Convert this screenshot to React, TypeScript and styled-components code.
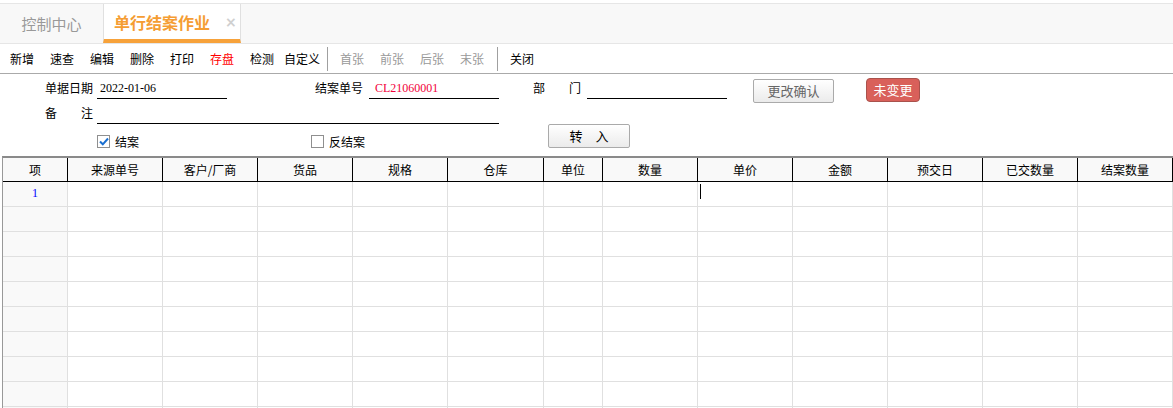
import React from 'react';
import styled, { createGlobalStyle } from 'styled-components';

const Global = createGlobalStyle`
  html, body { margin: 0; padding: 0; background: #fff; }
  body {
    font-family: "Noto Sans CJK SC", "Noto Sans", sans-serif;
    width: 1173px;
    height: 408px;
    overflow: hidden;
    color: #000;
  }
  * { box-sizing: border-box; }
`;

const Page = styled.div`
  display: flex;
  flex-direction: column;
  width: 1173px;
  height: 408px;
  overflow: hidden;
`;

const TabBar = styled.div`
  display: flex;
  margin-top: 3px;
  height: 41px;
  background: #f8f8f8;
  border-top: 1px solid #e6e6e6;
  border-bottom: 1px solid #e6e6e6;
`;

const Tab = styled.div<{ $active?: boolean }>`
  display: flex;
  align-items: center;
  height: 39px;
  font-size: ${p => (p.$active ? '16px' : '15px')};
  font-weight: ${p => (p.$active ? 700 : 400)};
  color: ${p => (p.$active ? '#f59d33' : '#999')};
  background: ${p => (p.$active ? '#fff' : 'transparent')};
  width: ${p => (p.$active ? '138px' : '103px')};
  justify-content: ${p => (p.$active ? 'flex-start' : 'center')};
  padding: ${p => (p.$active ? '0 0 0 10px' : '0')};
  border-left: ${p => (p.$active ? '1px solid #e0e0e0' : 'none')};
  border-right: ${p => (p.$active ? '1px solid #e0e0e0' : 'none')};
  border-bottom: ${p => (p.$active ? '4px solid #f7a23a' : 'none')};
`;

const Close = styled.span`
  margin-left: 15px;
  font-size: 14px;
  font-weight: 700;
  color: #d0d0d0;
  font-family: "DejaVu Sans", sans-serif;
`;

const Toolbar = styled.div`
  display: flex;
  align-items: center;
  height: 30px;
  padding-left: 2px;
  border-bottom: 1px solid #aaa;
`;

const ToolButton = styled.div<{ $tone?: 'red' | 'off' }>`
  width: 40px;
  text-align: center;
  font-size: 12px;
  line-height: 28px;
  color: ${p => (p.$tone === 'red' ? '#ff0000' : p.$tone === 'off' ? '#999' : '#000')};
  white-space: nowrap;
`;

const Sep = styled.div`
  width: 1px;
  height: 24px;
  background: #a0a0a0;
  margin: 0 4px 0 5px;
`;

const Form = styled.div`
  display: flex;
  flex-direction: column;
  padding: 4px 0 7px 0;
  height: 82px;
`;

const FormRow = styled.div<{ $h: number; $pl: number }>`
  display: flex;
  align-items: flex-start;
  height: ${p => p.$h}px;
  padding-left: ${p => p.$pl}px;
`;

const Label = styled.div<{ $ml?: number }>`
  display: flex;
  justify-content: space-between;
  width: 48px;
  margin-left: ${p => p.$ml ?? 0}px;
  font-size: 12px;
  line-height: 20px;
`;

const Line = styled.div<{ $w: number; $ml: number; $pl?: number; $red?: boolean }>`
  width: ${p => p.$w}px;
  height: 21px;
  margin-left: ${p => p.$ml}px;
  padding-left: ${p => p.$pl ?? 3}px;
  border-bottom: 1px solid #000;
  font-family: "Liberation Serif", serif;
  font-size: 12px;
  line-height: 20px;
  color: ${p => (p.$red ? '#f2003a' : '#000')};
`;

const Btn = styled.div<{ $ml: number; $w: number; $mt?: number; $tone?: 'gray' | 'dark' }>`
  margin-left: ${p => p.$ml}px;
  margin-top: ${p => p.$mt ?? 0}px;
  width: ${p => p.$w}px;
  height: 24px;
  border: 1px solid #aaa;
  border-radius: 2px;
  background: linear-gradient(#ffffff, #ebebeb);
  font-size: 13px;
  line-height: 22px;
  text-align: center;
  color: ${p => (p.$tone === 'gray' ? '#666' : '#000')};
  white-space: pre;
`;

const RedBtn = styled.div<{ $ml: number }>`
  margin-left: ${p => p.$ml}px;
  width: 54px;
  height: 24px;
  border: 1px solid #a9524c;
  border-radius: 4px;
  background: #d9605a;
  color: #fff;
  font-size: 13px;
  line-height: 22px;
  text-align: center;
`;

const Check = styled.label<{ $ml?: number }>`
  display: flex;
  align-items: center;
  margin-left: ${p => p.$ml ?? 0}px;
  margin-top: 11px;
  font-size: 12px;
  line-height: 13px;
  gap: 5px;
`;

const Box = styled.span`
  display: inline-flex;
  align-items: center;
  justify-content: center;
  width: 13px;
  height: 13px;
  border: 1px solid #8f8f8f;
  background: #fff;
`;

const Table = styled.div`
  margin-left: 2px;
  border-top: 2px solid #8a8a8a;
  border-left: 1px solid #999;
  flex: 1;
  overflow: hidden;
`;

const GridRow = styled.div<{ $head?: boolean }>`
  display: grid;
  grid-template-columns: 65px repeat(4, 95px) 96px 59px repeat(6, 95px);
  height: ${p => (p.$head ? 24 : 25)}px;
  border-bottom: 1px solid ${p => (p.$head ? '#000' : '#e0e0e0')};
  background: ${p => (p.$head ? '#f9f9f9' : '#fff')};
`;

const Cell = styled.div<{ $head?: boolean; $index?: boolean }>`
  border-right: 1px solid ${p => (p.$head ? '#000' : '#e0e0e0')};
  background: ${p => (p.$index ? '#f9f9f9' : 'transparent')};
  font-size: 12px;
  line-height: ${p => (p.$head ? 23 : 24)}px;
  text-align: center;
  display: flex;
  justify-content: center;
  align-items: ${p => (p.$head ? 'center' : 'flex-start')};
`;

const IndexNum = styled.span`
  font-family: "Liberation Serif", serif;
  font-size: 12px;
  color: #0000ff;
  line-height: 22px;
`;

const CaretCell = styled(Cell)`
  justify-content: flex-start;
  padding: 2px 0 0 2px;
`;

const Caret = styled.span`
  display: block;
  width: 1px;
  height: 15px;
  background: #000;
`;

const headers = ['项', '来源单号', '客户/厂商', '货品', '规格', '仓库', '单位', '数量', '单价', '金额', '预交日', '已交数量', '结案数量'];

const CheckMark = () => (
  <svg width="10" height="9" viewBox="0 0 10 9">
    <path d="M1 4.5 L3.8 7.3 L9 1.5" fill="none" stroke="#1a6fd0" strokeWidth="2" />
  </svg>
);

export default function App() {
  const rows = Array.from({ length: 10 }, (_, i) => i);
  return (
    <Page>
      <Global />
      <TabBar>
        <Tab>控制中心</Tab>
        <Tab $active>
          单行结案作业<Close>×</Close>
        </Tab>
      </TabBar>
      <Toolbar>
        <ToolButton>新增</ToolButton>
        <ToolButton>速查</ToolButton>
        <ToolButton>编辑</ToolButton>
        <ToolButton>删除</ToolButton>
        <ToolButton>打印</ToolButton>
        <ToolButton $tone="red">存盘</ToolButton>
        <ToolButton>检测</ToolButton>
        <ToolButton>自定义</ToolButton>
        <Sep />
        <ToolButton $tone="off">首张</ToolButton>
        <ToolButton $tone="off">前张</ToolButton>
        <ToolButton $tone="off">后张</ToolButton>
        <ToolButton $tone="off">末张</ToolButton>
        <Sep />
        <ToolButton>关闭</ToolButton>
      </Toolbar>
      <Form>
        <FormRow $h={25} $pl={45}>
          <Label>
            <span>单据日期</span>
          </Label>
          <Line $w={130} $ml={4} $pl={3}>2022-01-06</Line>
          <Label $ml={88}>
            <span>结案单号</span>
          </Label>
          <Line $w={130} $ml={6} $pl={6} $red>CL21060001</Line>
          <Label $ml={34}>
            <span>部</span>
            <span>门</span>
          </Label>
          <Line $w={140} $ml={6} />
          <Btn $ml={26} $w={81} $mt={1} $tone="gray">更改确认</Btn>
          <RedBtn $ml={32}>未变更</RedBtn>
        </FormRow>
        <FormRow $h={21} $pl={45}>
          <Label>
            <span>备</span>
            <span>注</span>
          </Label>
          <Line $w={402} $ml={4} />
        </FormRow>
        <FormRow $h={25} $pl={97}>
          <Check>
            <Box>
              <CheckMark />
            </Box>
            结案
          </Check>
          <Check $ml={172}>
            <Box />
            反结案
          </Check>
          <Btn $ml={183} $w={82}>{'转　入'}</Btn>
        </FormRow>
      </Form>
      <Table>
        <GridRow $head>
          {headers.map(h => (
            <Cell key={h} $head>
              {h}
            </Cell>
          ))}
        </GridRow>
        {rows.map(r => (
          <GridRow key={r}>
            {headers.map((h, ci) =>
              ci === 0 ? (
                <Cell key={h} $index>
                  {r === 0 ? <IndexNum>1</IndexNum> : null}
                </Cell>
              ) : r === 0 && ci === 8 ? (
                <CaretCell key={h}>
                  <Caret />
                </CaretCell>
              ) : (
                <Cell key={h} />
              )
            )}
          </GridRow>
        ))}
      </Table>
    </Page>
  );
}
